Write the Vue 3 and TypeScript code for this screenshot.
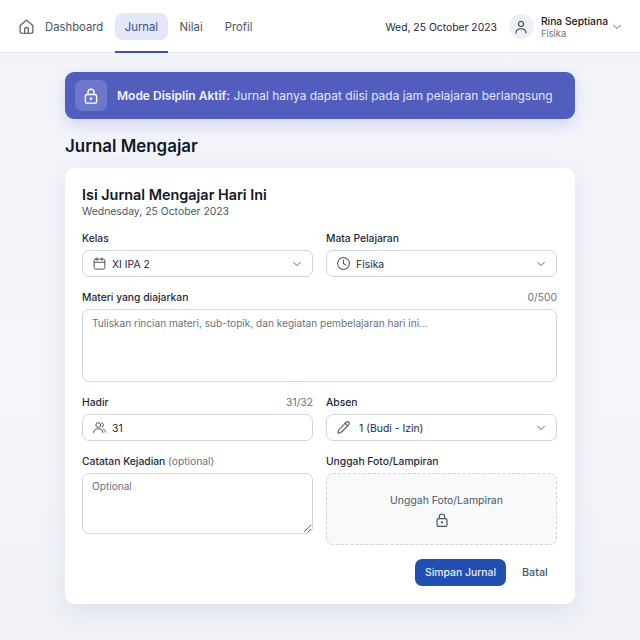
<script setup lang="ts">
const navItems = ["Dashboard", "Jurnal", "Nilai", "Profil"];
const activeNav = "Jurnal";
</script>

<template>
  <div class="page">
    <header class="topbar">
      <svg class="home" viewBox="0 0 24 24" width="17" height="17" fill="none" stroke="#4b5563" stroke-width="1.7" stroke-linecap="round" stroke-linejoin="round">
        <path d="M3 10.5 12 3l9 7.5V19a2.5 2.5 0 0 1-2.5 2.5h-13A2.5 2.5 0 0 1 3 19z" />
        <path d="M9.5 21.5V15a1.5 1.5 0 0 1 1.5-1.5h2a1.5 1.5 0 0 1 1.5 1.5v6.500" />
      </svg>
      <nav class="nav">
        <a v-for="item in navItems" :key="item" class="nav-item" :class="{ active: item === activeNav }">{{ item }}</a>
      </nav>
      <span class="date">Wed, 25 October 2023</span>
      <div class="avatar">
        <svg viewBox="0 0 24 24" width="16" height="16" fill="none" stroke="#374151" stroke-width="1.6" stroke-linecap="round">
          <circle cx="12" cy="7.500" r="3.800" />
          <path d="M4.500 21c0-4 3-6.500 7.500-6.500s7.500 2.500 7.500 6.500" />
        </svg>
      </div>
      <div class="user">
        <div class="user-name">Rina Septiana</div>
        <div class="user-sub">Fisika</div>
      </div>
      <svg class="user-chevron" viewBox="0 0 12 12" width="10" height="10" fill="none" stroke="#4b5563" stroke-width="1.100" stroke-linecap="round" stroke-linejoin="round">
        <path d="M2 4l4 4 4-4" />
      </svg>
    </header>

    <main class="content">
      <div class="banner">
        <div class="banner-icon">
          <svg viewBox="0 0 24 24" width="18" height="18" fill="none" stroke="#fff" stroke-width="1.800" stroke-linecap="round">
            <rect x="4.500" y="10" width="15" height="11.500" rx="2.500" />
            <path d="M8 10V7a4 4 0 0 1 8 0v3" />
            <circle cx="12" cy="15.500" r="0.800" fill="#fff" />
          </svg>
        </div>
        <p class="banner-text"><strong>Mode Disiplin Aktif:</strong> Jurnal hanya dapat diisi pada jam pelajaran berlangsung</p>
      </div>

      <h1 class="page-title">Jurnal Mengajar</h1>

      <section class="card">
        <h2 class="card-title">Isi Jurnal Mengajar Hari Ini</h2>
        <p class="card-date">Wednesday, 25 October 2023</p>

        <div class="row first">
          <div class="field">
            <div class="label-row"><label>Kelas</label></div>
            <div class="control">
              <svg viewBox="0 0 24 24" width="15" height="15" fill="none" stroke="#4b5563" stroke-width="1.600" stroke-linecap="round">
                <rect x="3.500" y="5" width="17" height="16" rx="2.500" />
                <path d="M3.500 10h17M8 2.800V7M16 2.800V7" />
              </svg>
              <span class="value">XI IPA 2</span>
              <svg class="chevron" viewBox="0 0 12 12" width="10" height="10" fill="none" stroke="#4b5563" stroke-width="1.100" stroke-linecap="round" stroke-linejoin="round">
                <path d="M2 4l4 4 4-4" />
              </svg>
            </div>
          </div>
          <div class="field">
            <div class="label-row"><label>Mata Pelajaran</label></div>
            <div class="control">
              <svg viewBox="0 0 24 24" width="15" height="15" fill="none" stroke="#4b5563" stroke-width="1.700" stroke-linecap="round" stroke-linejoin="round">
                <circle cx="12" cy="12" r="9.500" />
                <path d="M12 6.500V12l3.500 2.500" />
              </svg>
              <span class="value">Fisika</span>
              <svg class="chevron" viewBox="0 0 12 12" width="10" height="10" fill="none" stroke="#4b5563" stroke-width="1.100" stroke-linecap="round" stroke-linejoin="round">
                <path d="M2 4l4 4 4-4" />
              </svg>
            </div>
          </div>
        </div>

        <div class="field wide">
          <div class="label-row"><label>Materi yang diajarkan</label><span class="count">0/500</span></div>
          <textarea class="text materi" placeholder="Tuliskan rincian materi, sub-topik, dan kegiatan pembelajaran hari ini..." disabled></textarea>
        </div>

        <div class="row">
          <div class="field">
            <div class="label-row"><label>Hadir</label><span class="count">31/32</span></div>
            <div class="control">
              <svg viewBox="0 0 24 24" width="15" height="15" fill="none" stroke="#4b5563" stroke-width="1.600" stroke-linecap="round">
                <circle cx="10" cy="8" r="3.800" />
                <path d="M2.500 20c0-4 3-6 7.500-6s7.500 2 7.500 6" />
                <path d="M15.500 4.500a3.600 3.600 0 0 1 0 7M18.500 14.500c2 .8 3.200 2.600 3.200 5" />
              </svg>
              <span class="value">31</span>
            </div>
          </div>
          <div class="field">
            <div class="label-row"><label>Absen</label></div>
            <div class="control">
              <svg class="pencil" viewBox="0 0 24 24" width="15" height="15" fill="none" stroke="#4b5563" stroke-width="1.700" stroke-linecap="round" stroke-linejoin="round">
                <path d="M16.500 3.500a2.800 2.800 0 0 1 4 4L8 20l-5 1.200L4.200 16z" />
                <path d="M14.500 5.500l4 4" />
              </svg>
              <span class="value">1 (Budi - Izin)</span>
              <svg class="chevron" viewBox="0 0 12 12" width="10" height="10" fill="none" stroke="#4b5563" stroke-width="1.100" stroke-linecap="round" stroke-linejoin="round">
                <path d="M2 4l4 4 4-4" />
              </svg>
            </div>
          </div>
        </div>

        <div class="row top">
          <div class="field">
            <div class="label-row"><label>Catatan Kejadian <span class="muted">(optional)</span></label></div>
            <textarea class="text catatan" placeholder="Optional"></textarea>
          </div>
          <div class="field">
            <div class="label-row"><label>Unggah Foto/Lampiran</label></div>
            <div class="upload">
              <span class="upload-text">Unggah Foto/Lampiran</span>
              <svg viewBox="0 0 24 24" width="16" height="16" fill="none" stroke="#4b5563" stroke-width="1.800" stroke-linecap="round">
                <rect x="4.500" y="10" width="15" height="11.500" rx="2.500" />
                <path d="M8 10V7a4 4 0 0 1 8 0v3" />
                <circle cx="12" cy="15.500" r="0.900" fill="#4b5563" />
              </svg>
            </div>
          </div>
        </div>

        <div class="actions">
          <button class="save" type="button">Simpan Jurnal</button>
          <button class="cancel" type="button">Batal</button>
        </div>
      </section>
    </main>
  </div>
</template>

<style scoped>
.page {
  min-height: 640px;
  font-family: Inter, "Liberation Sans", sans-serif;
  color: #1f2937;
  background: linear-gradient(180deg, #f1f3f9 0%, #f5f6fb 60%, #f0f2f8 100%);
}

.topbar {
  height: 53px;
  box-sizing: border-box;
  display: flex;
  align-items: center;
  padding: 1px 18px 0;
  background: #fff;
  border-bottom: 1px solid #e8eaf0;
}

.home {
  flex: none;
}

.nav {
  display: flex;
  align-items: center;
  gap: 1px;
  margin-left: 10px;
  height: 27px;
}

.nav-item {
  position: relative;
  display: flex;
  align-items: center;
  height: 27px;
  padding: 0 10.500px;
  font-size: 11.300px;
  color: #4b5563;
  border-radius: 8px;
}

.nav-item:first-child {
  padding-left: 0;
}

.nav-item.active {
  padding: 0 10px;
  background: #e4e8f6;
  color: #3c4d96;
}

.nav-item.active::after {
  content: "";
  position: absolute;
  left: 0;
  right: 0;
  bottom: -13px;
  height: 2px;
  background: #3f4fa3;
}

.date {
  margin-left: auto;
  font-size: 10.350px;
  color: #1f2937;
}

.avatar {
  width: 25px;
  height: 25px;
  margin-left: 12px;
  border-radius: 50%;
  background: #eef0f4;
  display: flex;
  align-items: center;
  justify-content: center;
}

.user {
  margin-left: 7px;
}

.user-name {
  font-size: 10.300px;
  font-weight: 500;
  line-height: 14px;
  color: #111827;
}

.user-sub {
  font-size: 9.300px;
  line-height: 12px;
  color: #6b7280;
}

.user-chevron {
  margin-left: 4px;
}

.content {
  width: 510px;
  margin: 0 auto;
  padding-top: 19px;
}

.banner {
  height: 47px;
  box-sizing: border-box;
  display: flex;
  align-items: center;
  padding: 0 10px;
  border-radius: 9px;
  background: #515ebd;
  box-shadow: 0 6px 14px rgba(81, 94, 189, 0.2);
}

.banner-icon {
  flex: none;
  width: 32px;
  height: 31px;
  border-radius: 7px;
  background: #6d78cb;
  display: flex;
  align-items: center;
  justify-content: center;
}

.banner-text {
  margin: 0 0 0 10px;
  font-size: 12px;
  color: #e3e6f8;
  white-space: nowrap;
}

.banner-text strong {
  font-weight: 600;
  color: #f2f3fc;
}

.page-title {
  margin: 15px 0 10px;
  font-size: 16.900px;
  line-height: 24px;
  font-weight: 600;
  color: #111827;
}

.card {
  box-sizing: border-box;
  height: 436px;
  padding: 17px 18px 0 17px;
  border-radius: 9px;
  background: #fff;
  box-shadow: 0 8px 24px rgba(60, 70, 110, 0.1);
}

.card-title {
  margin: 0;
  font-size: 14.400px;
  line-height: 19px;
  font-weight: 600;
  color: #111827;
}

.card-date {
  margin: 0;
  font-size: 10.400px;
  line-height: 15px;
  color: #4b5563;
}

.row {
  display: grid;
  grid-template-columns: 231px 231px;
  column-gap: 13px;
  margin-top: 13px;
}

.row.first {
  margin-top: 12px;
}

.wide {
  margin-top: 13px;
}

.label-row {
  display: flex;
  justify-content: space-between;
  align-items: center;
  height: 14px;
  margin-bottom: 5px;
  font-size: 10.300px;
  color: #1f2937;
}

.label-row label {
  font-weight: 500;
}

.muted {
  font-weight: 400;
  color: #6b7280;
}

.count {
  color: #6b7280;
}

.control {
  height: 27px;
  box-sizing: border-box;
  display: flex;
  align-items: center;
  padding: 0 10px 0 9px;
  border: 1px solid #cfd6dc;
  border-radius: 7px;
  background: #fff;
}

.value {
  margin-left: 5px;
  padding-top: 1px;
  font-size: 10.400px;
  color: #1f2937;
}

.pencil + .value {
  margin-left: 8px;
}

.chevron {
  margin-left: auto;
}

.text {
  display: block;
  width: 100%;
  box-sizing: border-box;
  padding: 6px 9px;
  border: 1px solid #cfd6dc;
  border-radius: 7px;
  background: #fff;
  font-family: inherit;
  font-size: 10.100px;
  outline: none;
}

.text::placeholder {
  color: #6b7280;
  opacity: 1;
}

.materi {
  height: 73px;
  padding-top: 7px;
  resize: none;
}

.catatan {
  height: 61px;
}

.upload {
  height: 72px;
  box-sizing: border-box;
  display: flex;
  flex-direction: column;
  align-items: center;
  justify-content: center;
  gap: 5px;
  padding-top: 3px;
  border: 1px dashed #cfd4da;
  border-radius: 7px;
  background: #f8f9fb;
  font-size: 10.450px;
  color: #4b5563;
}

.upload-text {
  margin-left: 10px;
}

.actions {
  display: flex;
  justify-content: flex-end;
  align-items: center;
  margin-top: 14px;
}

.save {
  width: 91px;
  height: 27px;
  border: none;
  border-radius: 7px;
  background: #2350b0;
  color: #e8edfa;
  font-family: inherit;
  font-size: 10.400px;
  font-weight: 500;
}

.cancel {
  width: 51px;
  height: 27px;
  padding: 0 9px 0 16px;
  border: none;
  background: none;
  color: #4b5563;
  font-family: inherit;
  font-size: 10.800px;
  font-weight: 500;
  text-align: left;
}
</style>

<style>
html,
body {
  background: #f1f3f9;
}
</style>
